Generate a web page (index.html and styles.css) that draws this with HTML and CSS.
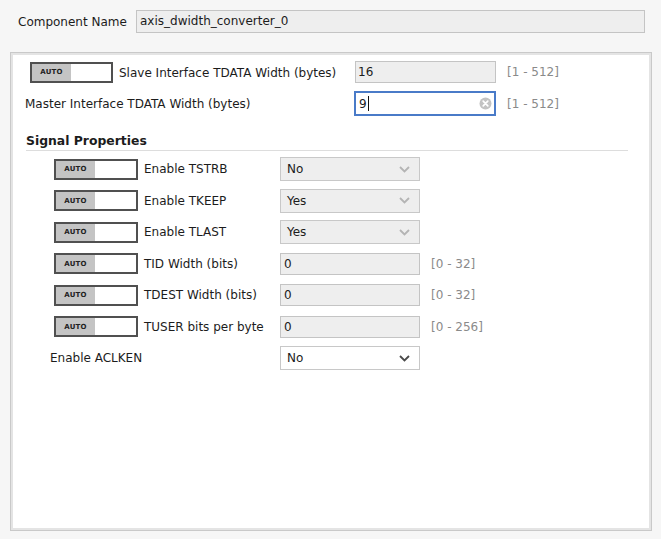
FILE: index.html
```html
<!DOCTYPE html>
<html>
<head>
<meta charset="utf-8">
<link rel="stylesheet" href="styles.css">
</head>
<body>
<div class="header">
  <span class="hdr-label">Component Name</span>
  <div class="name-input">axis_dwidth_converter_0</div>
</div>
<div class="panel">
  <div class="top-row row1">
    <div class="lead lead1">
      <span class="toggle"><span class="auto">AUTO</span></span>
      <span class="lbl">Slave Interface TDATA Width (bytes)</span>
    </div>
    <div class="field disabled">16</div>
    <span class="range">[1 - 512]</span>
  </div>
  <div class="top-row row2">
    <div class="lead lead2">
      <span class="lbl">Master Interface TDATA Width (bytes)</span>
    </div>
    <div class="field focused"><span class="val">9</span><span class="caret"></span>
      <svg class="clear" width="13" height="13" viewBox="0 0 13 13"><circle cx="6.5" cy="6.5" r="6" fill="#c3c3c3"/><path d="M4.2 4.2 L8.8 8.8 M8.8 4.2 L4.2 8.8" stroke="#fff" stroke-width="1.7" stroke-linecap="round"/></svg>
    </div>
    <span class="range">[1 - 512]</span>
  </div>

  <div class="section-title">Signal Properties</div>

  <div class="sig-grid">
    <span class="toggle"><span class="auto">AUTO</span></span>
    <span class="lbl">Enable TSTRB</span>
    <div class="select disabled"><span>No</span><svg class="chev" width="11" height="7" viewBox="0 0 11 7"><path d="M1 1 L5.5 5.5 L10 1" fill="none" stroke="#b4b4b4" stroke-width="1.8"/></svg></div>
    <span></span>

    <span class="toggle"><span class="auto">AUTO</span></span>
    <span class="lbl">Enable TKEEP</span>
    <div class="select disabled"><span>Yes</span><svg class="chev" width="11" height="7" viewBox="0 0 11 7"><path d="M1 1 L5.5 5.5 L10 1" fill="none" stroke="#b4b4b4" stroke-width="1.8"/></svg></div>
    <span></span>

    <span class="toggle"><span class="auto">AUTO</span></span>
    <span class="lbl">Enable TLAST</span>
    <div class="select disabled"><span>Yes</span><svg class="chev" width="11" height="7" viewBox="0 0 11 7"><path d="M1 1 L5.5 5.5 L10 1" fill="none" stroke="#b4b4b4" stroke-width="1.8"/></svg></div>
    <span></span>

    <span class="toggle"><span class="auto">AUTO</span></span>
    <span class="lbl">TID Width (bits)</span>
    <div class="field disabled small">0</div>
    <span class="range">[0 - 32]</span>

    <span class="toggle"><span class="auto">AUTO</span></span>
    <span class="lbl">TDEST Width (bits)</span>
    <div class="field disabled small">0</div>
    <span class="range">[0 - 32]</span>

    <span class="toggle"><span class="auto">AUTO</span></span>
    <span class="lbl">TUSER bits per byte</span>
    <div class="field disabled small">0</div>
    <span class="range">[0 - 256]</span>

    <span class="lbl aclken">Enable ACLKEN</span>
    <div class="select enabled"><span>No</span><svg class="chev" width="11" height="7" viewBox="0 0 11 7"><path d="M1 1 L5.5 5.5 L10 1" fill="none" stroke="#4a4a4a" stroke-width="1.8"/></svg></div>
    <span></span>
  </div>
</div>
</body>
</html>
```

FILE: styles.css
```css
html, body {
  margin: 0;
  padding: 0;
}
body {
  background: #f6f6f6;
  font-family: "DejaVu Sans", sans-serif;
  font-size: 12px;
  color: #1c1c1c;
  width: 661px;
  height: 539px;
  overflow: hidden;
}
.header {
  display: flex;
  align-items: center;
  padding: 10px 16px 0 18px;
}
.hdr-label {
  width: 118px;
  flex: none;
}
.name-input {
  flex: 1;
  height: 23px;
  box-sizing: border-box;
  border: 1px solid #c4c4c4;
  background: #eeeeee;
  padding-left: 3px;
  line-height: 21px;
}
.panel {
  margin: 19px 9px 8px 10px;
  height: 479px;
  box-sizing: border-box;
  border: 1px solid #c9c9c9;
  box-shadow: inset 0 0 0 2px #e4e4e4;
  background: #fff;
  padding-top: 8px;
}
.top-row {
  display: flex;
  align-items: center;
}
.row1 { height: 22px; }
.row2 { height: 25px; margin-top: 8px; }
.lead {
  width: 344px;
  flex: none;
  display: flex;
  align-items: center;
  box-sizing: border-box;
}
.lead1 { padding-left: 19px; }
.lead1 .toggle { width: 83px; margin-right: 6px; }
.lead1 .lbl { padding-top: 2px; }
.lead2 { padding-left: 14px; width: 343px; }
.toggle {
  display: flex;
  width: 84px;
  height: 21px;
  box-sizing: border-box;
  border: 2px solid #505050;
  background: #fff;
  flex: none;
}
.auto {
  width: 39px;
  background: #c4c4c4;
  font-weight: bold;
  font-size: 7px;
  display: flex;
  align-items: center;
  justify-content: center;
  color: #222;
  letter-spacing: 0.2px;
}
.field {
  box-sizing: border-box;
  height: 22px;
  width: 141px;
  border: 1px solid #c4c4c4;
  padding-left: 2px;
  display: flex;
  align-items: center;
}
.field.disabled { background: #eeeeee; }
.field.focused {
  width: 142px;
  height: 25px;
  border: 2px solid #4a7bc8;
  background: #fff;
  padding-left: 3px;
  position: relative;
}
.caret {
  display: inline-block;
  width: 1px;
  height: 15px;
  background: #111;
  margin-left: 1px;
}
.clear {
  position: absolute;
  right: 2px;
  top: 4px;
}
.field.small {
  width: 140px;
  padding-left: 3px;
}
.range {
  color: #8a8a8a;
  margin-left: 11px;
}
.section-title {
  font-weight: bold;
  font-size: 12.4px;
  line-height: 15px;
  margin: 17px 23px 0 15px;
  padding-bottom: 2px;
  border-bottom: 1px solid #dddddd;
}
.sig-grid {
  display: grid;
  grid-template-columns: 84px 142px 140px auto;
  column-gap: 0;
  grid-auto-rows: 24px;
  row-gap: 7.5px;
  align-items: center;
  margin: 6px 0 0 43px;
}
.sig-grid .lbl {
  padding-left: 6px;
}
.sig-grid .lbl.aclken {
  grid-column: 1 / 3;
  padding-left: 0;
  margin-left: -4px;
}
.select {
  box-sizing: border-box;
  height: 24px;
  width: 140px;
  border: 1px solid #c8c8c8;
  display: flex;
  align-items: center;
  justify-content: space-between;
  padding: 0 9px 0 6px;
}
.select.disabled { background: #eeeeee; }
.select.enabled { background: #fff; }
.chev { display: block; }
```
